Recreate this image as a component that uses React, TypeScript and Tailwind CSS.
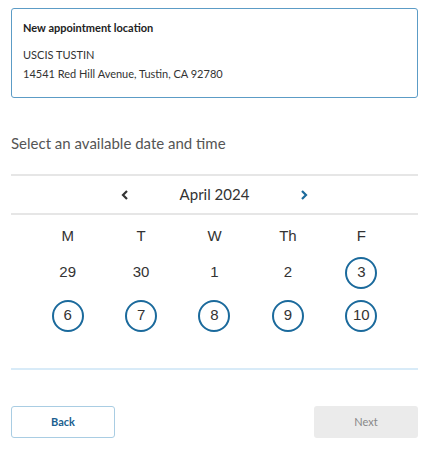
import React from "react";

const ss = { fontFamily: "Lato, 'Open Sans', sans-serif" };

function Day({ n, avail }: { n: string; avail?: boolean }) {
  return (
    <div className="flex h-[43px] items-center justify-center">
      {avail ? (
        <button className="flex h-[32px] w-[32px] items-center justify-center rounded-full border-2 border-[#1b6a9c] text-[15px] text-[#333]">
          {n}
        </button>
      ) : (
        <span className="text-[15px] text-[#333]">{n}</span>
      )}
    </div>
  );
}

export default function App() {
  const heads = ["M", "T", "W", "Th", "F"];
  const days: [string, boolean][] = [
    ["29", false],
    ["30", false],
    ["1", false],
    ["2", false],
    ["3", true],
    ["6", true],
    ["7", true],
    ["8", true],
    ["9", true],
    ["10", true],
  ];

  return (
    <div className="w-[433px] h-[449px] bg-white pl-[11px] pr-[15px] pt-[8px]" style={ss}>
      {/* LOCATION CARD */}
      <div className="rounded-[3px] border border-[#5c9cc6] px-[11px] pt-[11px] pb-[14px] text-[11px] text-[#333]">
        <div className="font-bold text-[#222]">New appointment location</div>
        <div className="mt-[10px]">USCIS TUSTIN</div>
        <div className="mt-[3px]">14541 Red Hill Avenue, Tustin, CA 92780</div>
      </div>

      <div className="mt-[34px] text-[15px] text-[#555]">Select an available date and time</div>

      {/* CALENDAR */}
      <div className="mt-[20px] border-t-2 border-[#e6e6e6]">
        <div className="flex h-[39px] items-center justify-center border-b-2 border-[#e6e6e6]">
          <button className="w-[20px] text-[#333]">
            <svg width="8" height="10" viewBox="0 0 8 10" className="mx-auto">
              <path d="M6 1 L2 5 L6 9" fill="none" stroke="currentColor" strokeWidth="2.2" />
            </svg>
          </button>
          <div className="mx-[45px] text-[15px] text-[#333]">April 2024</div>
          <button className="w-[20px] text-[#1b6a9c]">
            <svg width="8" height="10" viewBox="0 0 8 10" className="mx-auto">
              <path d="M2 1 L6 5 L2 9" fill="none" stroke="currentColor" strokeWidth="2.2" />
            </svg>
          </button>
        </div>

        <div
          className="grid grid-cols-5 px-[20px] pt-[6px]"
          style={{ fontFamily: "'Liberation Sans', Arial, sans-serif" }}
        >
          {heads.map((h) => (
            <div key={h} className="flex h-[30px] items-center justify-center text-[15px] text-[#333]">
              {h}
            </div>
          ))}
          {days.map(([n, a]) => (
            <Day key={n} n={n} avail={a} />
          ))}
        </div>
      </div>

      <div className="mt-[31px] border-t-2 border-[#d8ebf8]" />

      {/* BUTTONS */}
      <div className="mt-[36px] flex justify-between">
        <button className="h-[32px] w-[104px] rounded-[3px] border border-[#a9cde3] text-[11px] font-bold text-[#1b5f8f]">
          Back
        </button>
        <button className="h-[32px] w-[104px] rounded-[3px] bg-[#ebebeb] text-[11px] text-[#888]">
          Next
        </button>
      </div>
    </div>
  );
}
